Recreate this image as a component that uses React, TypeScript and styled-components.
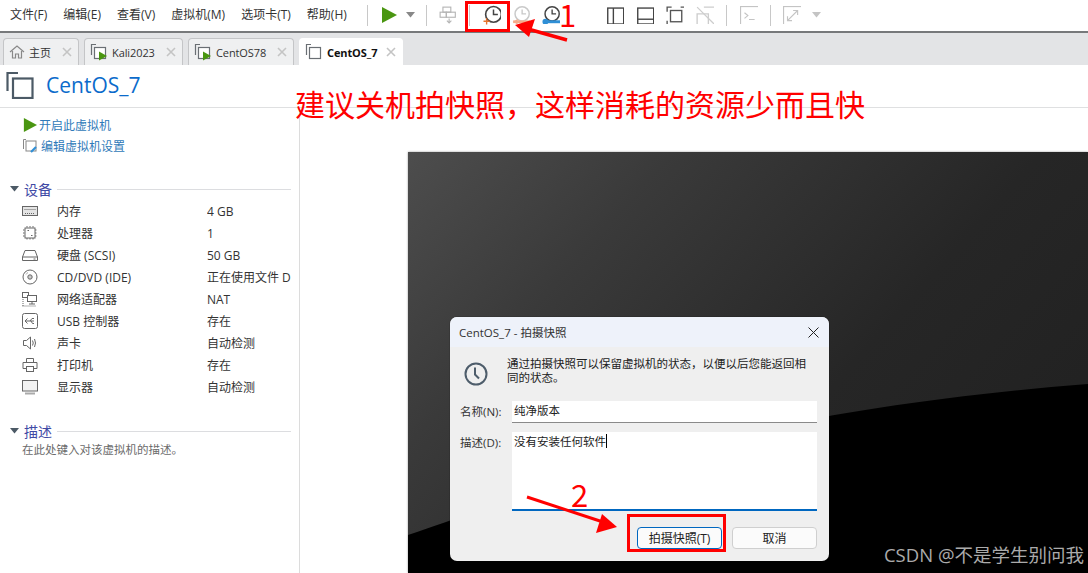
import React from "react";
import styled, { createGlobalStyle } from "styled-components";

const Global = createGlobalStyle`
  html, body { margin: 0; padding: 0; background: #fff; }
  body { font-family: "Open Sans", "Noto Sans CJK SC", sans-serif; font-size: 12px; color: #222; }
  * { box-sizing: border-box; }
`;

const Page = styled.div`
  position: relative;
  width: 1088px;
  height: 573px;
  overflow: hidden;
  display: flex;
  flex-direction: column;
  background: #fff;
`;

const Toolbar = styled.div`
  height: 33px;
  flex: none;
  display: flex;
  align-items: center;
  padding: 0 0 1px 10px;
  border-bottom: 2px solid #77797b;
`;
const Menu = styled.div`
  display: flex;
  gap: 16px;
  width: 357px;
  flex: none;
  line-height: 16px;
`;
const MenuItem = styled.span`
  color: #333;
  white-space: nowrap;
`;
const Sep = styled.span`
  width: 1px;
  height: 21px;
  background: #c8c8c8;
  flex: none;
`;
const Tool = styled.span<{ $w: number; $ml?: number }>`
  width: ${(p) => p.$w}px;
  margin-left: ${(p) => p.$ml ?? 0}px;
  height: 24px;
  flex: none;
  display: flex;
  align-items: center;
  justify-content: center;
`;

const TabBar = styled.div`
  height: 32px;
  flex: none;
  background: #e3e4e6;
  display: flex;
  align-items: flex-end;
  padding-left: 3px;
  gap: 5px;
`;
const Tab = styled.div<{ $w: number; $active?: boolean }>`
  width: ${(p) => p.$w}px;
  height: 27px;
  display: flex;
  align-items: center;
  padding: 0 5px 0 5px;
  gap: 4px;
  background: ${(p) => (p.$active ? "#fff" : "#eff0f1")};
  border: 1px solid ${(p) => (p.$active ? "#fff" : "#c4c5c7")};
  border-bottom: none;
  border-radius: 4px 4px 0 0;
  font-weight: ${(p) => (p.$active ? 700 : 400)};
  font-size: 11px;
  color: ${(p) => (p.$active ? "#111" : "#333")};
  letter-spacing: -0.1px;
`;
const TabLabel = styled.span`
  flex: 1;
  white-space: nowrap;
`;

const TitleRow = styled.div`
  height: 43px;
  flex: none;
  display: flex;
  align-items: center;
  padding: 0 0 2px 6px;
  gap: 12px;
  border-bottom: 1px solid #dfe0e1;
`;
const Title = styled.h1`
  margin: 0;
  font-size: 21px;
  font-weight: 400;
  color: #0b6bcb;
  line-height: 28px;
`;

const Body = styled.div`
  flex: 1;
  min-height: 0;
  display: flex;
`;
const Sidebar = styled.aside`
  width: 300px;
  flex: none;
  border-right: 1px solid #dcdcdc;
  padding: 6px 8px 0 10px;
`;
const Action = styled.div`
  display: flex;
  align-items: center;
  gap: 2px;
  height: 21px;
  padding-left: 13px;
  color: #2f7ab9;
`;
const Actions = styled.div`
  margin-bottom: 22px;
`;
const SectionHead = styled.div<{ $mt?: number }>`
  display: flex;
  align-items: center;
  gap: 5px;
  height: 22px;
  margin-top: ${(p) => p.$mt ?? 0}px;
  font-size: 14px;
  color: #3f4aa5;
  white-space: nowrap;
`;
const Rule = styled.span`
  flex: 1;
  height: 1px;
  background: #dcdde0;
`;
const Row = styled.div`
  display: grid;
  grid-template-columns: 16px 19px 150px 1fr;
  height: 22px;
  align-items: center;
  padding-left: 12px;
  column-gap: 0;
  color: #333;
  white-space: nowrap;
`;
const RowName = styled.span`
  grid-column: 3;
  margin-left: -16px;
  padding-left: 16px;
`;
const Value = styled.span`
  overflow: hidden;
`;
const Hint = styled.div`
  color: #6b6b6b;
  font-size: 11.5px;
  padding-left: 12px;
  line-height: 16px;
`;

const Main = styled.main`
  flex: 1;
  min-width: 0;
  padding: 44px 0 0 108px;
`;
const Preview = styled.div`
  position: relative;
  height: 100%;
  min-height: 421px;
  background: linear-gradient(132deg, #4d4d4d 0%, #3a3a3a 25%, #262626 60%, #1f1f1f 100%);
  box-shadow: 0 0 2px #999;
`;
const Curve = styled.svg`
  position: absolute;
  inset: 0;
  width: 100%;
  height: 100%;
`;

const Dialog = styled.div`
  position: absolute;
  left: 42px;
  top: 165px;
  width: 379px;
  height: 244px;
  background: #efefef;
  border-radius: 7px;
  overflow: hidden;
  display: flex;
  flex-direction: column;
  box-shadow: 0 0 1px #000;
`;
const DialogTitle = styled.div`
  height: 30px;
  flex: none;
  display: flex;
  align-items: center;
  justify-content: space-between;
  padding: 0 10px 0 9px;
  background: #eef2fa;
  color: #333;
  font-size: 11.5px;
`;
const DialogBody = styled.div`
  flex: 1;
  padding: 10px 12px 11px 10px;
  display: flex;
  flex-direction: column;
`;
const Intro = styled.div`
  display: flex;
  align-items: flex-start;
  gap: 19px;
  height: 44px;
  margin-left: 4px;
`;
const IntroText = styled.p`
  margin: 0;
  font-size: 11.5px;
  line-height: 14px;
  color: #222;
  width: 310px;
`;
const Field = styled.div<{ $mb?: number }>`
  display: grid;
  grid-template-columns: 52px 1fr;
  margin-bottom: ${(p) => p.$mb ?? 0}px;
`;
const FieldLabel = styled.label`
  font-size: 11.5px;
  color: #333;
  line-height: 22px;
`;
const TextBox = styled.div<{ $h: number; $focus?: boolean }>`
  height: ${(p) => p.$h}px;
  background: #fff;
  border-bottom: ${(p) => (p.$focus ? "2px solid #0067c0" : "1px solid #8a8a8a")};
  padding: 1px 2px;
  font-size: 11.5px;
  line-height: 18px;
  color: #222;
`;
const Caret = styled.span`
  display: inline-block;
  width: 1px;
  height: 14px;
  background: #000;
  vertical-align: -2px;
`;
const Buttons = styled.div`
  display: flex;
  justify-content: flex-end;
  gap: 10px;
  margin-top: 16px;
`;
const Btn = styled.button<{ $primary?: boolean }>`
  width: 85px;
  height: 22px;
  padding: 0;
  background: #fbfbfb;
  border: 1px solid ${(p) => (p.$primary ? "#0067c0" : "#cfcfcf")};
  border-radius: 4px;
  font: inherit;
  font-size: 12px;
  color: #222;
`;

const RedBox = styled.div<{ $l: number; $t: number; $w: number; $h: number }>`
  position: absolute;
  left: ${(p) => p.$l}px;
  top: ${(p) => p.$t}px;
  width: ${(p) => p.$w}px;
  height: ${(p) => p.$h}px;
  border: 3px solid #f00;
`;
const Note = styled.span<{ $l: number; $t: number; $s: number }>`
  position: absolute;
  left: ${(p) => p.$l}px;
  top: ${(p) => p.$t}px;
  font-size: ${(p) => p.$s}px;
  line-height: 1;
  color: #f00;
  white-space: nowrap;
  font-family: "Noto Sans CJK SC", sans-serif;
`;
const Arrows = styled.svg`
  position: absolute;
  inset: 0;
  width: 1088px;
  height: 573px;
  pointer-events: none;
`;
const Watermark = styled.span`
  position: absolute;
  right: 4px;
  top: 542px;
  font-size: 18.5px;
  line-height: 26px;
  color: #ababab;
  white-space: nowrap;
`;

type IP = { s?: number; c?: string; children?: React.ReactNode };
const I = ({ s = 16, c = "#666", children }: IP) => (
  <svg width={s} height={s} viewBox="0 0 16 16" fill="none" stroke={c} strokeWidth="1">
    {children}
  </svg>
);
const Play = ({ s = 16 }: { s?: number }) => (
  <svg width={s} height={s} viewBox="0 0 16 16"><path d="M1 0 L16 8 L1 16Z" fill="#4a9611" /></svg>
);
const Caretdown = ({ c = "#888" }: { c?: string }) => (
  <svg width="9" height="6" viewBox="0 0 9 6"><path d="M0 0H9L4.5 5.5Z" fill={c} /></svg>
);
const VmIcon = ({ run }: { run?: boolean }) => (
  <svg width="18" height="18" viewBox="0 0 18 18" fill="none" stroke="#6a6f74" strokeWidth="1.2">
    <path d="M6 1.5H1.5V12" />
    <rect x="4.5" y="4.5" width="11" height="11" fill="#fff" />
    {run && <path d="M9 8.5 L17 13 L9 17.5Z" fill="#4a9611" stroke="none" />}
  </svg>
);
const TabClose = () => (
  <svg width="12" height="12" viewBox="0 0 12 12" stroke="#c4c4c4" strokeWidth="1.6"><path d="M2 2L10 10M10 2L2 10" /></svg>
);
const Clock = ({ c = "#444", cx = 11, cy = 7 }: { c?: string; cx?: number; cy?: number }) => (
  <>
    <circle cx={cx} cy={cy} r="6.3" stroke={c} strokeWidth="1.3" />
    <path d={`M${cx} ${cy - 4}V${cy}H${cx + 3.5}`} stroke={c} strokeWidth="1.2" />
  </>
);

const rows: [React.ReactNode, string, string][] = [
  [<I key="m"><rect x="0.5" y="3.5" width="15" height="9" fill="#e4e4e4" /><path d="M2.5 6.5H13.5M3 10.5H13" strokeDasharray="1 1" /></I>, "内存", "4 GB"],
  [<I key="c"><rect x="3" y="3" width="10" height="10" /><path d="M5 1V15M8 1V15M11 1V15M1 5H15M1 8H15M1 11H15" strokeDasharray="1.5 10.5" strokeDashoffset="0" /><path d="M5.5 5.5H7M10.5 10.5H9" /></I>, "处理器", "1"],
  [<I key="d"><path d="M3 3.5H13L15.5 10V13.5H.5V10Z" /><path d="M.5 10H15.5M11.5 12H13.5" /></I>, "硬盘 (SCSI)", "50 GB"],
  [<I key="cd"><circle cx="8" cy="8" r="7" /><circle cx="8" cy="8" r="2.2" fill="#ccc" /><path d="M4 5.5A5 5 0 0 1 6 3.5" stroke="#aaa" /></I>, "CD/DVD (IDE)", "正在使用文件 D:..."],
  [<I key="n"><rect x=".5" y="1.5" width="6" height="5" /><rect x="5.5" y="4.5" width="9" height="6" fill="#fff" /><path d="M10 11V13M7 13H13" /><path d="M.5 15H14M1 8V15" strokeDasharray="1 1" /></I>, "网络适配器", "NAT"],
  [<I key="u"><rect x=".5" y=".5" width="15" height="15" rx="2" /><path d="M3 8H12M5.5 5.5L3 8L5.5 10.5M8 8L10 5.5H12M9 8L10.5 10.5H12" /></I>, "USB 控制器", "存在"],
  [<I key="s"><path d="M1.5 5.5H4.5L8.5 2V14L4.5 10.5H1.5Z" /><path d="M10.5 5.5Q12 8 10.5 10.5M12.5 4Q14.5 8 12.5 12" /></I>, "声卡", "自动检测"],
  [<I key="p"><path d="M4.5 5V1.5H11.5V5M4.5 11.5H1V5.5H15V11.5H11.5" /><rect x="4.5" y="9.5" width="7" height="5" /></I>, "打印机", "存在"],
  [<I key="md"><rect x=".5" y="1.5" width="15" height="10.5" fill="#f2f2f2" /><path d="M3 14.5H13" strokeWidth="2" stroke="#aaa" /></I>, "显示器", "自动检测"],
];

export default function App() {
  return (
    <Page>
      <Global />
      <Toolbar>
        <Menu>
          {["文件(F)", "编辑(E)", "查看(V)", "虚拟机(M)", "选项卡(T)", "帮助(H)"].map((m) => (
            <MenuItem key={m}>{m}</MenuItem>
          ))}
        </Menu>
        <Sep />
        <Tool $w={30} $ml={6}><Play s={16} /></Tool>
        <Tool $w={12}><Caretdown /></Tool>
        <Tool $w={10} />
        <Sep />
        <Tool $w={42}>
          <I s={18} c="#b5b5b5">
            <rect x="3.5" y="1" width="7" height="4.5" /><rect x="1" y="5.5" width="5.5" height="4.5" /><rect x="6.5" y="5.5" width="8" height="4.5" />
            <path d="M9 11V14M7 13L9 15L11 13" />
          </I>
        </Tool>
        <Sep />
        <Tool $w={42}>
          <I s={20}>
            <Clock cx={10} cy={7.5} />
            <path d="M3 14H8M5.5 11.5V16.5" stroke="#e8742c" strokeWidth="1.1" transform="translate(-1 -1)" />
          </I>
        </Tool>
        <Tool $w={18}>
          <I s={18}>
            <Clock c="#c9c9c9" cx={9} cy={7} />
            <path d="M1 14H16" stroke="#f5ab8a" strokeWidth="2.4" /><path d="M1 14L5 11.5V16.5Z" fill="#f5ab8a" stroke="none" />
          </I>
        </Tool>
        <Tool $w={42}>
          <I s={18}>
            <Clock cx={9} cy={7} />
            <path d="M3 14H16" stroke="#2f8fd6" strokeWidth="2.6" /><circle cx="3" cy="14" r="2.6" fill="#2f8fd6" stroke="none" />
          </I>
        </Tool>
        <Tool $w={18} $ml={34}>
          <I s={17} c="#444"><rect x=".7" y="1" width="15" height="15" strokeWidth="1.3" /><path d="M6 1V16" strokeWidth="1.3" /></I>
        </Tool>
        <Tool $w={30} $ml={6}>
          <I s={17} c="#444"><rect x=".7" y="1" width="15" height="15" strokeWidth="1.3" /><path d="M1 11.5H16" strokeWidth="1.3" /></I>
        </Tool>
        <Tool $w={30}>
          <I s={18} c="#555">
            <rect x="4" y="4" width="10" height="10" strokeWidth="1.2" />
            <path d="M1 5V1H5M13 1H17V5M17 13V17H13M5 17H1V13" strokeWidth="1.2" />
          </I>
        </Tool>
        <Tool $w={30}>
          <I s={18} c="#cdcdcd">
            <path d="M7 1H17V11M1 7H11V17H1Z" strokeWidth="1.2" />
            <path d="M1 1L17 17" strokeWidth="1.1" />
          </I>
        </Tool>
        <Tool $w={6} />
        <Sep />
        <Tool $w={43}>
          <I s={18} c="#c4c4c4"><rect x=".5" y=".5" width="16" height="16" /><path d="M4 6L7 8.5L4 11M8 12H13" /></I>
        </Tool>
        <Sep />
        <Tool $w={41}>
          <I s={18} c="#c4c4c4"><rect x=".5" y=".5" width="16" height="16" /><path d="M4 13L13 4M9 4H13V8M4 9V13H8" /></I>
        </Tool>
        <Tool $w={1} $ml={-1} />
        <Caretdown c="#c4c4c4" />
      </Toolbar>

      <TabBar>
        <Tab $w={76}>
          <I s={16} c="#888"><path d="M1 8L8 2L15 8M3.5 7V14H6.5V10H9.5V14H12.5V7" strokeWidth="1.2" /></I>
          <TabLabel>主页</TabLabel><TabClose />
        </Tab>
        <Tab $w={99}><VmIcon run /><TabLabel>Kali2023</TabLabel><TabClose /></Tab>
        <Tab $w={106}><VmIcon run /><TabLabel>CentOS78</TabLabel><TabClose /></Tab>
        <Tab $w={104} $active><VmIcon /><TabLabel>CentOS_7</TabLabel><TabClose /></Tab>
      </TabBar>

      <TitleRow>
        <svg width="28" height="28" viewBox="0 0 28 28" fill="none" stroke="#4c5a66" strokeWidth="2.2">
          <path d="M12 2H1.5V20" />
          <rect x="7" y="7.5" width="19.5" height="19.5" fill="#fff" />
        </svg>
        <Title>CentOS_7</Title>
      </TitleRow>

      <Body>
        <Sidebar>
          <Actions>
            <Action><Play s={14} /><span>开启此虚拟机</span></Action>
            <Action>
              <I s={16} c="#888">
                <path d="M3 1.5H.5V11" /><rect x="3" y="3" width="10" height="10" />
                <path d="M8 14L13 9" stroke="#2f8fd6" strokeWidth="2.2" />
              </I>
              <span>编辑虚拟机设置</span>
            </Action>
          </Actions>
          <SectionHead><Caretdown c="#4c5a66" /><span>设备</span><Rule /></SectionHead>
          {rows.map(([icon, name, value]) => (
            <Row key={name}>
              {icon}
              <span />
              <RowName>{name}</RowName>
              <Value>{value}</Value>
            </Row>
          ))}
          <SectionHead $mt={22}><Caretdown c="#4c5a66" /><span>描述</span><Rule /></SectionHead>
          <Hint>在此处键入对该虚拟机的描述。</Hint>
        </Sidebar>

        <Main>
          <Preview>
            <Curve viewBox="0 0 680 421" preserveAspectRatio="none">
              <path d="M0 383 C 130 340, 300 262, 680 232 V421 H0Z" fill="#000" />
            </Curve>
            <Dialog>
              <DialogTitle>
                <span>CentOS_7 - 拍摄快照</span>
                <svg width="11" height="11" viewBox="0 0 11 11" stroke="#222" strokeWidth="1"><path d="M.5.5L10.5 10.5M10.5.5L.5 10.5" /></svg>
              </DialogTitle>
              <DialogBody>
                <Intro>
                  <svg width="24" height="24" viewBox="0 0 24 24" fill="none" stroke="#4e5d6b" strokeWidth="2" style={{ marginTop: 5 }}>
                    <circle cx="12" cy="12" r="10.5" /><path d="M11 5.5V12.5L15 16.5" />
                  </svg>
                  <IntroText>通过拍摄快照可以保留虚拟机的状态，以便以后您能返回相同的状态。</IntroText>
                </Intro>
                <Field $mb={9}>
                  <FieldLabel>名称(N):</FieldLabel>
                  <TextBox $h={22}>纯净版本</TextBox>
                </Field>
                <Field>
                  <FieldLabel>描述(D):</FieldLabel>
                  <TextBox $h={79} $focus>没有安装任何软件<Caret /></TextBox>
                </Field>
                <Buttons>
                  <Btn $primary>拍摄快照(T)</Btn>
                  <Btn>取消</Btn>
                </Buttons>
              </DialogBody>
            </Dialog>
          </Preview>
        </Main>
      </Body>

      <Note $l={295} $t={88} $s={30}>建议关机拍快照，这样消耗的资源少而且快</Note>
      <Note $l={559} $t={-2} $s={31}>1</Note>
      <Note $l={571} $t={478} $s={31}>2</Note>
      <RedBox $l={465} $t={1} $w={45} $h={31} />
      <RedBox $l={627} $t={514} $w={99} $h={38} />
      <Arrows viewBox="0 0 1088 573">
        <path d="M567 40 L528 29" stroke="#f00" strokeWidth="3.5" />
        <path d="M515 25 L535 19 L529 37Z" fill="#f00" />
        <path d="M527 497 L603 522" stroke="#f00" strokeWidth="3" />
        <path d="M617 527 L596 533 L602 514Z" fill="#f00" />
      </Arrows>
      <Watermark>CSDN @不是学生别问我</Watermark>
    </Page>
  );
}
